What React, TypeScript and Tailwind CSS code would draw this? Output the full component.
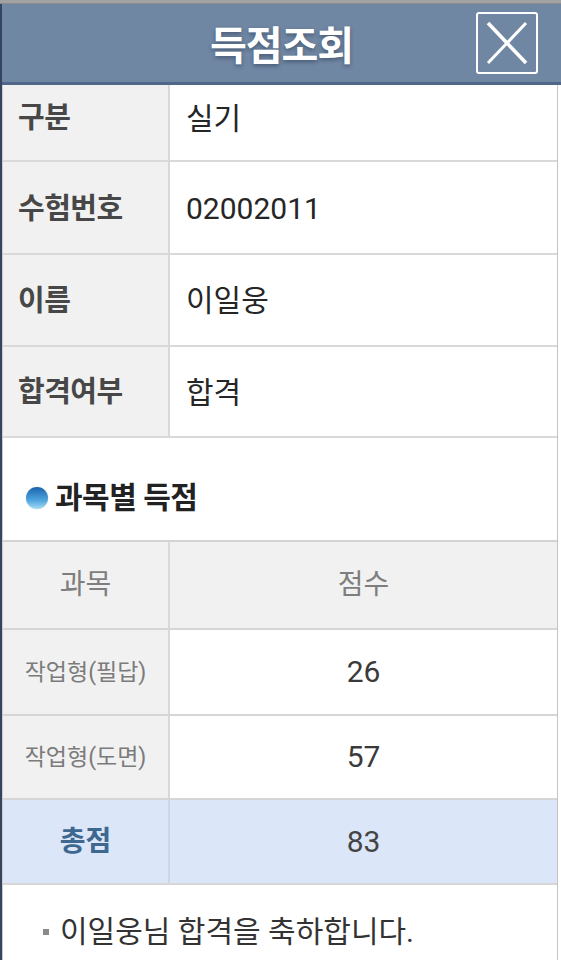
import React from "react";

function CloseBox() {
  return (
    <div className="w-[62px] h-[62px] border-[2px] border-white rounded-[3px] flex items-center justify-center">
      <svg width="44" height="44" viewBox="0 0 44 44">
        <path d="M3 2 L41 42" stroke="white" strokeWidth="3.6" strokeLinecap="butt" />
        <path d="M41 2 L3 42" stroke="white" strokeWidth="3" strokeLinecap="butt" />
      </svg>
    </div>
  );
}

function InfoRow({ label, value, h, extra }: { label: string; value: string; h: string; extra?: string }) {
  return (
    <div className={`flex border-b-[2px] border-[#d9d9d9] ${h}`}>
      <div className={`w-[167px] shrink-0 bg-[#f1f1f1] border-r-[2px] border-[#d9d9d9] flex items-center pl-[15px] ${extra ?? ""}`}>
        <span className="text-[29px] font-bold text-[#474747] leading-none tracking-[-0.5px]">{label}</span>
      </div>
      <div className={`flex-1 flex items-center pl-[16px] ${extra ?? ""}`}>
        <span className="text-[30px] text-[#262626] leading-none">{value}</span>
      </div>
    </div>
  );
}

function ScoreRow({ name, score, h }: { name: string; score: string; h: string }) {
  return (
    <div className={`flex border-b-[2px] border-[#d6d6d6] ${h}`}>
      <div className="w-[167px] shrink-0 bg-[#f1f1f1] border-r-[2px] border-[#d9d9d9] flex items-center justify-center">
        <span className="text-[23px] text-[#7b7b7b] leading-none">{name}</span>
      </div>
      <div className="flex-1 flex items-center justify-center">
        <span className="text-[30px] text-[#3a3a3a] leading-none">{score}</span>
      </div>
    </div>
  );
}

export default function App() {
  return (
    <div className="w-[561px] h-[960px] overflow-hidden bg-white font-['Roboto','Noto_Sans_CJK_KR',sans-serif]">
      <div className="h-[4px] bg-[#a2a2a2] border-b border-[#8d8d8d]" />
      <div className="h-[956px] border-l-[2px] border-[#33455f] flex flex-col">
        <header className="h-[81px] shrink-0 bg-[#7087a4] border-b-[3px] border-[#50678a] grid grid-cols-[1fr_auto_1fr] items-center">
          <div />
          <h1 className="text-white text-[40px] font-bold leading-none tracking-[-1px] [text-shadow:0_2px_4px_rgba(20,30,50,0.45)] pt-[7px]">
            득점조회
          </h1>
          <div className="flex justify-end pr-[23px]">
            <CloseBox />
          </div>
        </header>

        <div className="flex-1 flex flex-col border-l border-[#cdcdcd] border-r border-r-[#c4c4c4] mr-[3px]">
          <InfoRow label="구분" value="실기" h="h-[77px]" extra="pb-[8px]" />
          <InfoRow label="수험번호" value="02002011" h="h-[93px]" extra="pt-[3px]" />
          <InfoRow label="이름" value="이일웅" h="h-[92px]" extra="pt-[2px]" />
          <InfoRow label="합격여부" value="합격" h="h-[91px]" extra="pt-[2px]" />

          <div className="h-[102px] shrink-0 flex items-center pt-[18px] pl-[23px] gap-[7px]">
            <span className="w-[22px] h-[22px] rounded-full bg-[linear-gradient(180deg,#1b62ad,#4ea5de_60%,#a6dcf4)] shadow-[0_0_1px_rgba(0,0,0,0.3)]" />
            <span className="text-[30px] font-bold text-[#222222] leading-none tracking-[-0.5px]">과목별 득점</span>
          </div>

          <div className="border-t-[2px] border-[#d3d3d3]">
            <div className="flex h-[88px] border-b-[2px] border-[#d6d6d6] bg-[#f1f1f1]">
              <div className="w-[167px] shrink-0 border-r-[2px] border-[#d9d9d9] flex items-center justify-center">
                <span className="text-[28px] text-[#7e7e7e] leading-none">과목</span>
              </div>
              <div className="flex-1 flex items-center justify-center">
                <span className="text-[28px] text-[#7e7e7e] leading-none">점수</span>
              </div>
            </div>
            <ScoreRow name="작업형(필답)" score="26" h="h-[86px]" />
            <ScoreRow name="작업형(도면)" score="57" h="h-[84px]" />
            <div className="flex h-[85px] border-b-[2px] border-[#d6d6d6] bg-[#dbe6f9]">
              <div className="w-[167px] shrink-0 border-r-[2px] border-[#cfd6e2] flex items-center justify-center">
                <span className="text-[28px] font-bold text-[#3e6890] leading-none">총점</span>
              </div>
              <div className="flex-1 flex items-center justify-center">
                <span className="text-[30px] text-[#444444] leading-none">83</span>
              </div>
            </div>
          </div>

          <div className="flex items-center pl-[40px] pt-[18px] h-[75px] gap-[11px]">
            <span className="w-[6px] h-[6px] bg-[#8a8a8a]" />
            <span className="text-[30px] text-[#333333] leading-none">이일웅님 합격을 축하합니다.</span>
          </div>
        </div>
      </div>
    </div>
  );
}
